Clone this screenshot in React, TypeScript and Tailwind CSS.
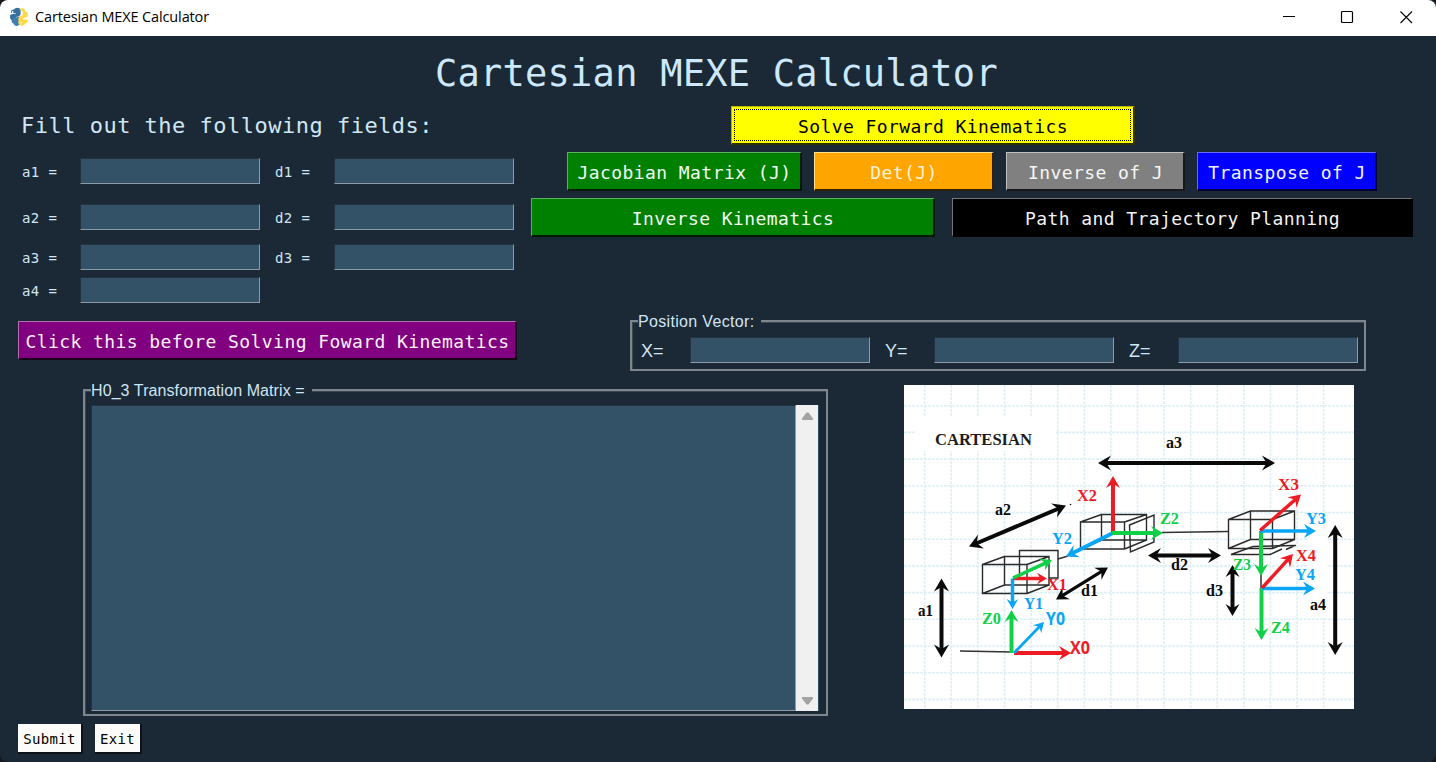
import React from "react";

const MONO = "font-['DejaVu_Sans_Mono',monospace]";

function PythonLogo() {
  return (
    <svg width="20" height="20" viewBox="0 0 20 20" className="shrink-0">
      <path d="M6 1.5Q8 0 10.5 1.2Q12 2 11.6 4.5V7Q11.5 8.6 9.8 9.3L7.5 10Q6 10.8 6 12.5V14.5Q4.5 14.8 2.5 13.2Q0.3 10.5 1 8.5Q1.6 7 3.5 7L7 6.6V6H1.8Q1.6 3.2 3.4 2.8Q4.8 3 6 1.5Z" fill="#35709f" />
      <path d="M3 12Q5 11 7 10.5L11 9.5V17Q10.5 18.8 7.5 18.9Q5 18.8 4.5 16.5Q2 16 3 12Z" fill="#3f7fb4" />
      <path d="M10 2Q13 0.4 15.5 2Q16.4 3 16 4.6Q19 4.8 19 7.5Q19 10 16.5 10.6L14 11.3V12.5H18.8Q19.4 15.5 17 16.4Q15.8 16.4 15 18Q12.5 19.4 10 17.8Q9 17 9.4 14V11.5Q9.5 10 11.5 9.2Q14 8.6 14 6.5Q13.8 3.5 10 2Z" fill="#ffd84a" />
      <circle cx="3.6" cy="5" r="0.9" fill="#fff" />
      <circle cx="12.4" cy="15.6" r="0.9" fill="#fff" />
    </svg>
  );
}

function Field() {
  return (
    <div className="h-[26px] w-[180px] shrink-0 border-t border-r border-b border-l border-t-[#22323e] border-r-[#8d9ba7] border-b-[#8d9ba7] border-l-[#22323e] bg-[#335267]" />
  );
}

function Label({ children, className = "" }: { children: React.ReactNode; className?: string }) {
  return (
    <span className={`${MONO} shrink-0 text-[14px] leading-[26px] tracking-[0.37px] whitespace-pre text-[#cfe6f5] ${className}`}>
      {children}
    </span>
  );
}

function FieldRow({ a, d, className = "" }: { a: string; d?: string; className?: string }) {
  return (
    <div className={`flex h-[26px] pl-[4px] ${className}`}>
      <Label className="w-[58px] pt-[1px]">{a + " ="}</Label>
      <Field />
      {d && (
        <>
          <Label className="ml-[15px] w-[59px] pt-[1px]">{d + " ="}</Label>
          <Field />
        </>
      )}
    </div>
  );
}

function TkButton({ children, className }: { children: React.ReactNode; className: string }) {
  return (
    <button
      className={`${MONO} flex shrink-0 items-center justify-center border-t border-r-2 border-b-2 border-l border-r-black/80 border-b-black/80 pt-[3px] pl-[1px] text-[18px] tracking-[0.42px] whitespace-pre ${className}`}
    >
      {children}
    </button>
  );
}

function GroupFrame({ title, tracking, className, children }: { title: string; tracking: string; className: string; children: React.ReactNode }) {
  return (
    <div className={`relative border-2 border-[#7c868c] shadow-[inset_1px_1px_0_#3a4852] ${className}`}>
      <span className={`absolute top-[-10px] left-[6px] bg-[#1b2835] pr-[7px] font-['Liberation_Sans',sans-serif] text-[16px] leading-5 whitespace-pre text-[#cfe6f5] ${tracking}`}>
        {title}
      </span>
      {children}
    </div>
  );
}

type Pt = [number, number];

function Arrow({ from, to, color, w = 4, both = false, head = 12 }: { from: Pt; to: Pt; color: string; w?: number; both?: boolean; head?: number }) {
  const angle = (Math.atan2(to[1] - from[1], to[0] - from[0]) * 180) / Math.PI;
  const len = Math.hypot(to[0] - from[0], to[1] - from[1]);
  const h = head * 0.58;
  return (
    <g transform={`translate(${from[0]} ${from[1]}) rotate(${angle})`} fill={color}>
      <line x1={both ? head * 0.5 : 0} x2={len - head * 0.5} y1="0" y2="0" stroke={color} strokeWidth={w} />
      <path d={`M${len} 0L${len - head} ${-h}L${len - head * 0.65} 0L${len - head} ${h}Z`} />
      {both && <path d={`M0 0L${head} ${-h}L${head * 0.65} 0L${head} ${h}Z`} />}
    </g>
  );
}

function Box({ x, y, x2, y2, bx, by, bx2, by2 }: Record<string, number>) {
  return (
    <path
      d={`M${x} ${y}H${x2}V${y2}H${x}ZM${bx} ${by}H${bx2}V${by2}H${bx}ZM${x} ${y}L${bx} ${by}M${x2} ${y}L${bx2} ${by}M${x2} ${y2}L${bx2} ${by2}M${x} ${y2}L${bx} ${by2}`}
      fill="none"
      stroke="#2b2b2b"
      strokeWidth="1.4"
    />
  );
}

const RED = "#ed1c24";
const GREEN = "#10d048";
const BLUE = "#0aa5f5";
const INK = "#0a0a0a";

const labels: { t: string; x: number; y: number; w: number; c: string; sans?: boolean }[] = [
  { t: "CARTESIAN", x: 935, y: 445, w: 97, c: "#1c1c1c" },
  { t: "a3", x: 1166, y: 448, w: 16, c: INK },
  { t: "a2", x: 995, y: 515, w: 16, c: INK },
  { t: "X2", x: 1077, y: 501, w: 20, c: RED },
  { t: "Z2", x: 1160, y: 523.5, w: 19, c: GREEN },
  { t: "Y2", x: 1052, y: 544, w: 20, c: BLUE },
  { t: "X3", x: 1278, y: 490, w: 21, c: RED },
  { t: "Y3", x: 1306, y: 524, w: 20, c: BLUE },
  { t: "d2", x: 1171, y: 570, w: 17, c: INK },
  { t: "Z3", x: 1233, y: 570, w: 18, c: GREEN },
  { t: "X4", x: 1296, y: 561, w: 20, c: RED },
  { t: "Y4", x: 1295, y: 580, w: 20, c: BLUE },
  { t: "d3", x: 1206, y: 596, w: 17, c: INK },
  { t: "a4", x: 1310, y: 610, w: 16, c: INK },
  { t: "Z4", x: 1271, y: 633, w: 19, c: GREEN },
  { t: "X1", x: 1047, y: 590, w: 20, c: RED },
  { t: "d1", x: 1081, y: 596, w: 17, c: INK },
  { t: "Y1", x: 1024, y: 609, w: 19, c: BLUE },
  { t: "Z0", x: 982, y: 624, w: 19, c: GREEN },
  { t: "Y0", x: 1046, y: 625, w: 19, c: BLUE, sans: true },
  { t: "X0", x: 1070, y: 653.5, w: 20, c: RED, sans: true },
  { t: "a1", x: 918, y: 616, w: 15, c: INK },
];

function RobotDiagram() {
  const cols = Array.from({ length: 16 }, (_, i) => 924.7 + i * 26.6);
  const rows = Array.from({ length: 12 }, (_, i) => 405.7 + i * 26.7);
  return (
    <svg width="450" height="324" viewBox="904 385 450 324" className="mt-[14px] ml-[76px] shrink-0 bg-white">
      <g stroke="#e0eff4" strokeWidth="1.6" strokeDasharray="3 1">
        {cols.map((x) => (
          <line key={x} x1={x} x2={x} y1="385" y2="709" />
        ))}
        {rows.map((y) => (
          <line key={y} x1="904" x2="1354" y1={y} y2={y} />
        ))}
      </g>
      <rect x="916" y="417" width="140" height="34" fill="#fff" />
      <rect x="1308" y="530" width="20" height="88" fill="#fff" />
      <path d="M960 651L1012 652M1058 559L1068 556M1162 532.5L1228 531.5M1261 572V588" stroke="#333" strokeWidth="1.5" fill="none" />
      <Box x={982.5} y={564.5} x2={1027} y2={593.5} bx={1004.5} by={556.5} bx2={1049} by2={585} />
      <path d="M1019.5 578V550.5H1058V578H1049" stroke="#2b2b2b" strokeWidth="1.4" fill="none" />
      <Box x={1080.5} y={522} x2={1124.5} y2={549} bx={1101.5} by={514.5} bx2={1146.5} by2={540} />
      <path d="M1129.5 525L1154 515V542L1130.5 552Z" stroke="#2b2b2b" strokeWidth="1.4" fill="none" />
      <Box x={1228.5} y={519.5} x2={1272.5} y2={548.5} bx={1250.5} by={511} bx2={1294.5} by2={539.5} />
      <path d="M1282 549L1270 554.5H1231L1253 546.5L1296 545.5M1286 549.5L1294 546" stroke="#2b2b2b" strokeWidth="1.5" fill="none" />
      <circle cx="1070.5" cy="504.5" r="0.8" fill={INK} />

      <Arrow from={[1098, 463]} to={[1275, 463]} color={INK} both head={13} />
      <Arrow from={[969, 546.5]} to={[1066, 505.5]} color={INK} both head={13} />
      <Arrow from={[1056, 599.5]} to={[1108, 567.5]} color={INK} both w={3.2} />
      <Arrow from={[1148, 555.5]} to={[1221, 555.5]} color={INK} both head={13} />
      <Arrow from={[1232.5, 565]} to={[1232.5, 616]} color={INK} both />
      <Arrow from={[1335.2, 525]} to={[1335.2, 655]} color={INK} both head={13} />
      <Arrow from={[941.5, 578.5]} to={[941.5, 657.5]} color={INK} both head={13} />

      <Arrow from={[1113, 534]} to={[1113, 476]} color={RED} />
      <Arrow from={[1113, 533]} to={[1066, 556.5]} color={BLUE} />
      <Arrow from={[1112, 533]} to={[1163, 533]} color={GREEN} />
      <Arrow from={[1261, 531]} to={[1261, 576]} color={GREEN} />
      <Arrow from={[1260, 531]} to={[1316, 531]} color={BLUE} w={3.5} />
      <Arrow from={[1260, 530.5]} to={[1301, 494.5]} color={RED} w={3.5} />
      <Arrow from={[1261.5, 588]} to={[1261.5, 640]} color={GREEN} />
      <Arrow from={[1262, 588.5]} to={[1315, 588.5]} color={BLUE} w={3.5} />
      <Arrow from={[1262, 588]} to={[1293, 554]} color={RED} w={3.5} />
      <Arrow from={[1012.5, 578.5]} to={[1012.5, 609]} color={BLUE} w={3.5} head={10} />
      <Arrow from={[1013, 578.5]} to={[1047, 578.5]} color={RED} w={3.5} head={10} />
      <Arrow from={[1013, 578]} to={[1052, 560]} color={GREEN} w={3.5} head={11} />
      <Arrow from={[1014, 653]} to={[1071, 653]} color={RED} />
      <Arrow from={[1014, 653]} to={[1044, 622]} color={BLUE} w={2.8} head={10} />
      <Arrow from={[1011.5, 653]} to={[1011.5, 610]} color={GREEN} />

      {labels.map((l) => (
        <text
          key={l.t}
          x={l.x}
          y={l.y}
          fill={l.c}
          textLength={l.w}
          lengthAdjust="spacingAndGlyphs"
          className={l.sans ? "font-['Open_Sans',sans-serif] text-[17px] font-bold" : "font-['Liberation_Serif',serif] text-[16.5px] font-bold"}
        >
          {l.t}
        </text>
      ))}
    </svg>
  );
}

export default function App() {
  return (
    <div className="h-[762px] w-[1436px] overflow-hidden bg-[#14181c]">
      <div className="flex h-full flex-col overflow-hidden rounded-lg bg-[#1b2835]">
        <header className="flex h-9 shrink-0 items-center bg-white pr-[22px] pl-[9px]">
          <div className="flex items-center gap-[6px] pb-[3px]">
            <PythonLogo />
            <span className="font-['Open_Sans',sans-serif] text-[14.5px] leading-5 tracking-[-0.13px] text-black">Cartesian MEXE Calculator</span>
          </div>
          <svg width="132" height="14" viewBox="0 0 132 14" fill="none" stroke="#000" className="mb-[2px] ml-auto">
            <path d="M1 6.5H13" />
            <rect x="59.5" y="1.5" width="11" height="11" rx="1" strokeWidth="1.2" />
            <path d="M118.5 1.5L130 13M130 1.5L118.5 13" strokeWidth="1.1" />
          </svg>
        </header>

        <h1 className={`${MONO} h-[70px] shrink-0 pl-[435px] text-[37px] leading-[76px] tracking-[0.24px] whitespace-pre text-[#cde8fb]`}>
          Cartesian MEXE Calculator
        </h1>

        <div className="flex h-[265px] shrink-0 pl-[18px]">
          <section className="w-[513px] shrink-0">
            <h2 className={`${MONO} h-[52px] pl-[3px] text-[22px] leading-[40px] tracking-[0.49px] whitespace-pre text-[#cfe6f5]`}>
              Fill out the following fields:
            </h2>
            <FieldRow a="a1" d="d1" />
            <FieldRow a="a2" d="d2" className="mt-[20px]" />
            <FieldRow a="a3" d="d3" className="mt-[14px]" />
            <FieldRow a="a4" className="mt-[7px]" />
            <TkButton className="mt-[18px] h-[39px] w-[499px] border-t-[#b070b0] border-l-[#b070b0] bg-[#800080] text-[#fbf3fb]">
              Click this before Solving Foward Kinematics
            </TkButton>
          </section>

          <section className="flex w-[882px] shrink-0 flex-col">
            <TkButton className="relative ml-[200px] h-[39px] w-[404px] border-t-[#b5b500] border-l-[#b5b500] bg-[#ffff00] text-black">
              Solve Forward Kinematics
              <span className="absolute inset-[2px] border border-dotted border-black" />
            </TkButton>
            <div className="mt-[7px] ml-[36px] flex">
              <TkButton className="h-[39px] w-[235px] border-t-[#5fae5f] border-l-[#5fae5f] bg-[#008000] text-[#f3fbf3]">Jacobian Matrix (J)</TkButton>
              <TkButton className="ml-[12px] h-[39px] w-[180px] border-t-[#ffdf90] border-l-[#ffdf90] bg-[#ffa500] text-[#fff3dc]">Det(J)</TkButton>
              <TkButton className="ml-[12px] h-[39px] w-[179px] border-t-[#c0c0c0] border-l-[#c0c0c0] bg-[#808080] text-[#f6f6f6]">Inverse of J</TkButton>
              <TkButton className="ml-[12px] h-[39px] w-[180px] border-t-[#6a6af0] border-l-[#6a6af0] bg-[#0000ff] text-[#f3f3ff]">Transpose of J</TkButton>
            </div>
            <div className="mt-[7px] flex justify-between">
              <TkButton className="h-[39px] w-[404px] border-t-[#5fae5f] border-l-[#5fae5f] bg-[#008000] text-[#f3fbf3]">Inverse Kinematics</TkButton>
              <TkButton className="h-[39px] w-[461px] border-t-[#70757a] border-l-[#70757a] bg-black text-[#f3f3f3]">Path and Trajectory Planning</TkButton>
            </div>
            <GroupFrame title="Position Vector:" tracking="tracking-[0.33px]" className="mt-[83px] ml-[99px] flex h-[51px] w-[736px] items-start pt-[15px] pl-[9px]">
              {["X=", "Y=", "Z="].map((l) => (
                <div key={l} className="flex w-[244px] shrink-0">
                  <span className="w-[49px] font-['Liberation_Sans',sans-serif] text-[18px] leading-[29px] text-[#cfe6f5]">{l}</span>
                  <Field />
                </div>
              ))}
            </GroupFrame>
          </section>
        </div>

        <div className="flex h-[345px] shrink-0 pl-[83px]">
          <GroupFrame title="H0_3 Transformation Matrix =" tracking="tracking-[0.09px]" className="mt-[18px] flex h-[327px] w-[745px] shrink-0 pt-[14px] pl-[6px]">
            <div className="h-[306px] w-[705px] border border-t-[#22323e] border-r-[#8d9ba7] border-b-[#8d9ba7] border-l-[#22323e] bg-[#335267]" />
            <div className="flex h-[306px] w-[23px] flex-col items-center justify-between border-r border-[#335267] bg-[#f0f0f0] pt-[7px] pb-[6px]">
              <svg width="11" height="9" viewBox="0 0 11 9">
                <path d="M4.5 0.5H6.5L11 6.5V8H0V6.5Z" fill="#a3a3a3" />
              </svg>
              <svg width="11" height="9" viewBox="0 0 11 9">
                <path d="M4.5 8.5H6.5L11 2.5V1H0V2.5Z" fill="#a3a3a3" />
              </svg>
            </div>
          </GroupFrame>
          <RobotDiagram />
        </div>

        <footer className="flex gap-[12px] pt-[8px] pl-[18px]">
          <button className={`${MONO} h-[30px] w-[65px] border-r-2 border-b-2 border-[#0c1218] bg-[#fbfbf9] pt-[2px] text-[14px] tracking-[0.35px] text-black`}>Submit</button>
          <button className={`${MONO} h-[30px] w-[47px] border-r-2 border-b-2 border-[#0c1218] bg-[#fbfbf9] pt-[2px] text-[14px] tracking-[0.35px] text-black`}>Exit</button>
        </footer>
      </div>
    </div>
  );
}
